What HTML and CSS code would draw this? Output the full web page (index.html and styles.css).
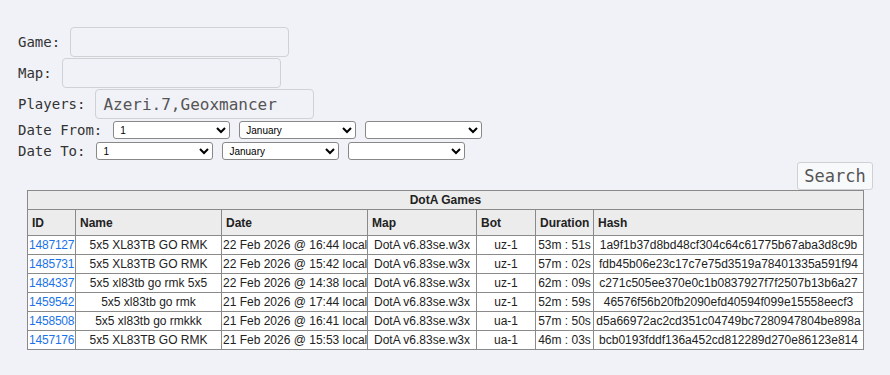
FILE: index.html
```html
<!DOCTYPE html>
<html lang="en">
<head>
    <meta charset="UTF-8">
    <title>DotA Games</title>
    <link rel="stylesheet" href="styles.css">
</head>
<body>
<div class="page">
    <div class="field"><label for="game">Game:</label><input type="text" id="game" class="text-input"></div>
    <div class="field"><label for="map">Map:</label><input type="text" id="map" class="text-input"></div>
    <div class="field"><label for="players">Players:</label><input type="text" id="players" class="text-input" value="Azeri.7,Geoxmancer"></div>

    <div class="field date-row">
        <label>Date From:</label>
        <select class="small-select"><option>1</option></select>
        <select class="small-select"><option>January</option></select>
        <select class="small-select"><option></option></select>
    </div>
    <div class="field date-row">
        <label>Date To:</label>
        <select class="small-select"><option>1</option></select>
        <select class="small-select"><option>January</option></select>
        <select class="small-select"><option></option></select>
    </div>

    <div class="search-row"><button class="search-btn">Search</button></div>

    <table class="games">
        <colgroup>
            <col class="col-id"><col class="col-name"><col class="col-date"><col class="col-map"><col class="col-bot"><col class="col-dur"><col>
        </colgroup>
        <tr class="caption"><th colspan="7">DotA Games</th></tr>
        <tr class="head">
            <th>ID</th><th>Name</th><th>Date</th><th>Map</th><th>Bot</th><th>Duration</th><th>Hash</th>
        </tr>
        <tr><td class="id"><a href="#">1487127</a></td><td>5x5 XL83TB GO RMK</td><td>22 Feb 2026 @ 16:44 local</td><td>DotA v6.83se.w3x</td><td>uz-1</td><td>53m : 51s</td><td>1a9f1b37d8bd48cf304c64c61775b67aba3d8c9b</td></tr>
        <tr><td class="id"><a href="#">1485731</a></td><td>5x5 XL83TB GO RMK</td><td>22 Feb 2026 @ 15:42 local</td><td>DotA v6.83se.w3x</td><td>uz-1</td><td>57m : 02s</td><td>fdb45b06e23c17c7e75d3519a78401335a591f94</td></tr>
        <tr><td class="id"><a href="#">1484337</a></td><td>5x5 xl83tb go rmk 5x5</td><td>22 Feb 2026 @ 14:38 local</td><td>DotA v6.83se.w3x</td><td>uz-1</td><td>62m : 09s</td><td>c271c505ee370e0c1b0837927f7f2507b13b6a27</td></tr>
        <tr><td class="id"><a href="#">1459542</a></td><td>5x5 xl83tb go rmk</td><td>21 Feb 2026 @ 17:44 local</td><td>DotA v6.83se.w3x</td><td>uz-1</td><td>52m : 59s</td><td>46576f56b20fb2090efd40594f099e15558eecf3</td></tr>
        <tr><td class="id"><a href="#">1458508</a></td><td>5x5 xl83tb go rmkkk</td><td>21 Feb 2026 @ 16:41 local</td><td>DotA v6.83se.w3x</td><td>ua-1</td><td>57m : 50s</td><td>d5a66972ac2cd351c04749bc7280947804be898a</td></tr>
        <tr><td class="id"><a href="#">1457176</a></td><td>5x5 XL83TB GO RMK</td><td>21 Feb 2026 @ 15:53 local</td><td>DotA v6.83se.w3x</td><td>ua-1</td><td>46m : 03s</td><td>bcb0193fddf136a452cd812289d270e86123e814</td></tr>
    </table>
</div>
</body>
</html>
```

FILE: styles.css
```css
body { margin: 0; background-color: #f1f2f7; font-family: "DejaVu Sans Mono", monospace; color: #333; }
.page { padding: 27px 17px 20px 18px; }
.field { display: flex; align-items: center; gap: 10px; margin-bottom: 1px; font-size: 14px; }
.field label { white-space: nowrap; }
.text-input { width: 219px; height: 30px; box-sizing: border-box; border: 1px solid #d0d1d5; border-radius: 4px; background-color: #f1f2f7; padding: 0 7px; font-family: "DejaVu Sans Mono", monospace; font-size: 16px; color: #555; }
.date-row { height: 20px; margin-bottom: 1px; gap: 9px; }
.date-row label { margin-right: 2px; }
.field:nth-child(4) { margin-top: 1px; }
.small-select { width: 117px; height: 18px; box-sizing: border-box; border: 1px solid #888; border-radius: 3px; background-color: #fff; font-family: "Liberation Sans", Arial, sans-serif; font-size: 10px; padding: 0 2px; color: #000; }
.search-row { display: flex; justify-content: flex-end; margin-top: 1px; }
.search-btn { width: 76px; height: 28px; border: 1px solid #cfd0d4; border-radius: 3px; background-color: #f8f9fb; font-family: "DejaVu Sans Mono", monospace; font-size: 17px; color: #555; padding: 0; }
.games { width: 837px; margin: 0 auto; border-collapse: collapse; table-layout: fixed; font-family: "Liberation Sans", Arial, sans-serif; font-size: 12px; color: #222; background-color: #fff; }
.col-id { width: 48px; }
.col-name { width: 146px; }
.col-date { width: 146px; }
.col-map { width: 109px; }
.col-bot { width: 59px; }
.col-dur { width: 58px; }
.games th, .games td { border: 1px solid #8a8a8a; white-space: nowrap; overflow: hidden; }
.games td { height: 18px; padding: 0 1px; text-align: center; }
.games td.id { padding: 0 0 0 1px; text-align: left; letter-spacing: -0.2px; }
.games th { background-color: #ececec; font-weight: bold; text-align: left; padding: 0 4px; }
.games .caption th { text-align: center; height: 18px; }
.games .head th { height: 25px; }
.games a { color: #1a73e8; text-decoration: none; }
```
